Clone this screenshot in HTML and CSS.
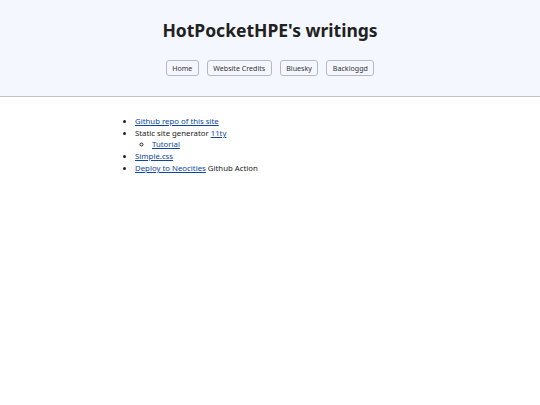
FILE: index.html
```html
<!DOCTYPE html>
<html lang="en">
<head>
    <meta charset="UTF-8">
    <meta name="viewport" content="width=device-width, initial-scale=1.0">
    <title>HotPocketHPE's writings</title>
    <link rel="stylesheet" href="styles.css">
</head>
<body>
    <header>
        <h1>HotPocketHPE's writings</h1>
        <nav>
            <a href="#">Home</a>
            <a href="#">Website Credits</a>
            <a href="#">Bluesky</a>
            <a href="#">Backloggd</a>
        </nav>
    </header>
    <main>
        <ul>
            <li><a href="#">Github repo of this site</a></li>
            <li>Static site generator <a href="#">11ty</a>
                <ul>
                    <li><a href="#">Tutorial</a></li>
                </ul>
            </li>
            <li><a href="#">Simple.css</a></li>
            <li><a href="#">Deploy to Neocities</a> Github Action</li>
        </ul>
    </main>
</body>
</html>
```

FILE: styles.css
```css
* {
    box-sizing: border-box;
}

body {
    margin: 0;
    font-family: "Noto Sans", sans-serif;
    font-size: 7.8px;
    line-height: 1.5;
    color: #212121;
    background-color: #fff;
}

header {
    background-color: #f5f7ff;
    border-bottom: 1px solid #c0c2cc;
    text-align: center;
    padding: 19.5px 0 20px;
}

h1 {
    margin: 0 0 19.5px;
    font-size: 17.5px;
    font-weight: 700;
    line-height: 21px;
}

nav {
    display: flex;
    justify-content: center;
    gap: 8px;
}

nav a {
    display: inline-block;
    color: #333;
    text-decoration: none;
    font-size: 7.1px;
    line-height: 12px;
    padding: 1px 5.5px;
    border: 1px solid #b4b8c8;
    border-radius: 3px;
}

main {
    width: 304px;
    margin: 0 auto;
    padding-top: 19px;
}

ul {
    margin: 0;
    padding-left: 17px;
}

a {
    color: #0d47a1;
}
```
